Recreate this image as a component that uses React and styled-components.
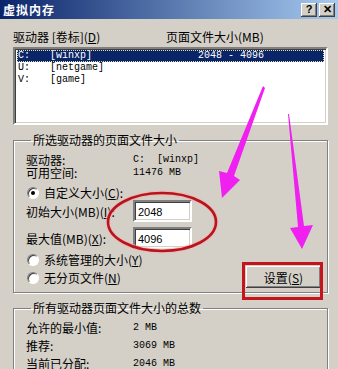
import styled, { createGlobalStyle } from "styled-components";

const GlobalStyle = createGlobalStyle`
	html, body {
		margin: 0;
		padding: 0;
		background: #d4d0c8;
	}
	body {
		font-family: "Noto Sans CJK SC", "Liberation Sans", sans-serif;
		font-size: 12px;
		color: #000;
	}
`;

const Window = styled.div`
	position: relative;
	width: 338px;
	height: 369px;
	overflow: hidden;
	background: #d4d0c8;
`;

const TitleBar = styled.div`
	display: flex;
	align-items: center;
	justify-content: space-between;
	height: 19px;
	padding: 0 3px 0 3px;
	background: linear-gradient(to right, #0a246a, #a6caf0);
`;

const Title = styled.div`
	color: #fff;
	font-weight: 700;
	font-size: 12px;
	line-height: 19px;
	letter-spacing: 1px;
`;

const TitleButtons = styled.div`
	display: flex;
	gap: 2px;
`;

const TitleButton = styled.div`
	width: 16px;
	height: 14px;
	background: #d4d0c8;
	box-shadow: inset -1px -1px 0 #404040, inset 1px 1px 0 #fff,
		inset -2px -2px 0 #808080;
	display: flex;
	align-items: center;
	justify-content: center;
	font-family: "Liberation Sans", sans-serif;
	font-weight: 700;
	font-size: 11px;
	line-height: 1;
`;

const Body = styled.div`
	padding: 11px 10px 0 13px;
`;

const HeaderRow = styled.div`
	display: flex;
	height: 13px;
	line-height: 13px;
`;

const HeaderCell = styled.div`
	width: ${(p) => p.$w || "auto"};
`;

const ListBox = styled.div`
	margin-top: 4px;
	height: 72px;
	background: #fff;
	border: 2px solid;
	border-color: #808080 #fff #fff #808080;
	box-shadow: inset 1px 1px 0 #404040, inset -1px -1px 0 #d4d0c8;
	padding: 1px 2px;
`;

const ListRow = styled.div`
	display: flex;
	height: 12px;
	line-height: 12px;
	padding-left: 1px;
	font-family: "Liberation Mono", monospace;
	font-size: 10px;
	color: ${(p) => (p.$selected ? "#fff" : "#000")};
	background: ${(p) => (p.$selected ? "#0a246a" : "transparent")};
	outline: ${(p) => (p.$selected ? "1px dotted #e8e0a0" : "none")};
	outline-offset: -1px;
`;

const ListCell = styled.span`
	width: ${(p) => p.$w};
	white-space: pre;
`;

const Group = styled.fieldset`
	margin: 8px 0 0 0;
	padding: ${(p) => p.$pad};
	border: 1px solid #808080;
	box-shadow: inset 1px 1px 0 #fff, 1px 1px 0 #fff;
	min-width: 0;
	height: ${(p) => p.$h || "auto"};
	box-sizing: border-box;
`;

const Legend = styled.legend`
	padding: 0 2px;
	margin-left: 5px;
	line-height: 14px;
	font-size: 12px;
`;

const InfoRow = styled.div`
	display: grid;
	grid-template-columns: 107px 1fr;
	align-items: center;
	height: ${(p) => p.$h || "13px"};
	line-height: 13px;
	margin-top: ${(p) => p.$mt || "0"};
`;

const Mono = styled.span`
	font-family: "Liberation Mono", monospace;
	font-size: 10px;
	white-space: pre;
`;

const RadioRow = styled.div`
	display: flex;
	align-items: center;
	gap: 5px;
	height: 14px;
	line-height: 14px;
	margin-left: 1px;
	margin-top: ${(p) => p.$mt || "0"};
`;

const Radio = styled.span`
	width: 12px;
	height: 12px;
	border-radius: 50%;
	box-sizing: border-box;
	background: #fff;
	border: 1px solid;
	border-color: #808080 #fff #fff #808080;
	box-shadow: inset 1px 1px 0 #404040;
	display: flex;
	align-items: center;
	justify-content: center;
	&::after {
		content: "";
		width: 4px;
		height: 4px;
		border-radius: 50%;
		background: ${(p) => (p.$checked ? "#000" : "transparent")};
	}
`;

const TextInput = styled.div`
	width: 59px;
	height: 22px;
	box-sizing: border-box;
	background: #fff;
	border: 2px solid;
	border-color: #808080 #fff #fff #808080;
	box-shadow: inset 1px 1px 0 #404040, inset -1px -1px 0 #d4d0c8;
	padding: 2px 3px;
	font-family: "Liberation Sans", sans-serif;
	font-size: 11px;
	line-height: 16px;
`;

const BottomRow = styled.div`
	display: flex;
	justify-content: space-between;
	align-items: flex-end;
	margin-top: 4px;
`;

const RadioColumn = styled.div`
	display: flex;
	flex-direction: column;
	gap: 4px;
`;

const Button = styled.div`
	width: 75px;
	height: 22px;
	margin-right: 6px;
	margin-bottom: -3px;
	box-sizing: border-box;
	background: #d4d0c8;
	box-shadow: inset -1px -1px 0 #404040, inset 1px 1px 0 #fff,
		inset -2px -2px 0 #808080;
	display: flex;
	align-items: center;
	justify-content: center;
	font-size: 12px;
`;

const Overlay = styled.svg`
	position: absolute;
	left: 0;
	top: 0;
	pointer-events: none;
`;

const Ul = styled.u`
	text-underline-offset: 1px;
`;

function App() {
	return (
		<Window>
			<GlobalStyle />
			<TitleBar>
				<Title>虚拟内存</Title>
				<TitleButtons>
					<TitleButton>?</TitleButton>
					<TitleButton>✕</TitleButton>
				</TitleButtons>
			</TitleBar>
			<Body>
				<HeaderRow>
					<HeaderCell $w="153px">
						驱动器 [卷标](<Ul>D</Ul>)
					</HeaderCell>
					<HeaderCell>页面文件大小(MB)</HeaderCell>
				</HeaderRow>
				<ListBox>
					<ListRow $selected>
						<ListCell $w="32px">C:</ListCell>
						<ListCell $w="148px">[winxp]</ListCell>
						<ListCell>2048 - 4096</ListCell>
					</ListRow>
					<ListRow>
						<ListCell $w="32px">U:</ListCell>
						<ListCell>[netgame]</ListCell>
					</ListRow>
					<ListRow>
						<ListCell $w="32px">V:</ListCell>
						<ListCell>[game]</ListCell>
					</ListRow>
				</ListBox>

				<Group $pad="6px 0 7px 12px">
					<Legend>所选驱动器的页面文件大小</Legend>
					<InfoRow>
						<span>驱动器:</span>
						<Mono>C:  [winxp]</Mono>
					</InfoRow>
					<InfoRow>
						<span>可用空间:</span>
						<Mono>11476 MB</Mono>
					</InfoRow>
					<RadioRow $mt="7px">
						<Radio $checked />
						<span>
							自定义大小(<Ul>C</Ul>):
						</span>
					</RadioRow>
					<InfoRow $h="22px">
						<span>
							初始大小(MB)(<Ul>I</Ul>):
						</span>
						<TextInput>2048</TextInput>
					</InfoRow>
					<InfoRow $h="22px" $mt="5px">
						<span>
							最大值(MB)(<Ul>X</Ul>):
						</span>
						<TextInput>4096</TextInput>
					</InfoRow>
					<BottomRow>
						<RadioColumn>
							<RadioRow>
								<Radio />
								<span>
									系统管理的大小(<Ul>Y</Ul>)
								</span>
							</RadioRow>
							<RadioRow>
								<Radio />
								<span>
									无分页文件(<Ul>N</Ul>)
								</span>
							</RadioRow>
						</RadioColumn>
						<Button>
							设置(<Ul>S</Ul>)
						</Button>
					</BottomRow>
				</Group>

				<Group $pad="3px 0 0 12px" $h="80px">
					<Legend>所有驱动器页面文件大小的总数</Legend>
					<InfoRow $h="18px">
						<span>允许的最小值:</span>
						<Mono>2 MB</Mono>
					</InfoRow>
					<InfoRow $h="18px">
						<span>推荐:</span>
						<Mono>3069 MB</Mono>
					</InfoRow>
					<InfoRow $h="18px">
						<span>当前已分配:</span>
						<Mono>2046 MB</Mono>
					</InfoRow>
				</Group>
			</Body>

			<Overlay width="338" height="369" viewBox="0 0 338 369">
				<ellipse
					cx="162"
					cy="222"
					rx="54"
					ry="29"
					fill="none"
					stroke="#f3b0b0"
					strokeWidth="5"
					opacity="0.6"
				/>
				<ellipse
					cx="162"
					cy="222"
					rx="54"
					ry="29"
					fill="none"
					stroke="#b8141c"
					strokeWidth="2.6"
				/>
				<rect
					x="243.5"
					y="263.5"
					width="78"
					height="35"
					fill="none"
					stroke="#c4141c"
					strokeWidth="3"
				/>
				<polygon
					points="263,86 265,88 234,176 240,180 222,198 219,171 227,173"
					fill="#f020f0"
				/>
				<polygon
					points="288,114 289,114 304,226 313,225 302,249 290,228 298,227"
					fill="#f020f0"
				/>
			</Overlay>
		</Window>
	);
}

export default App;
